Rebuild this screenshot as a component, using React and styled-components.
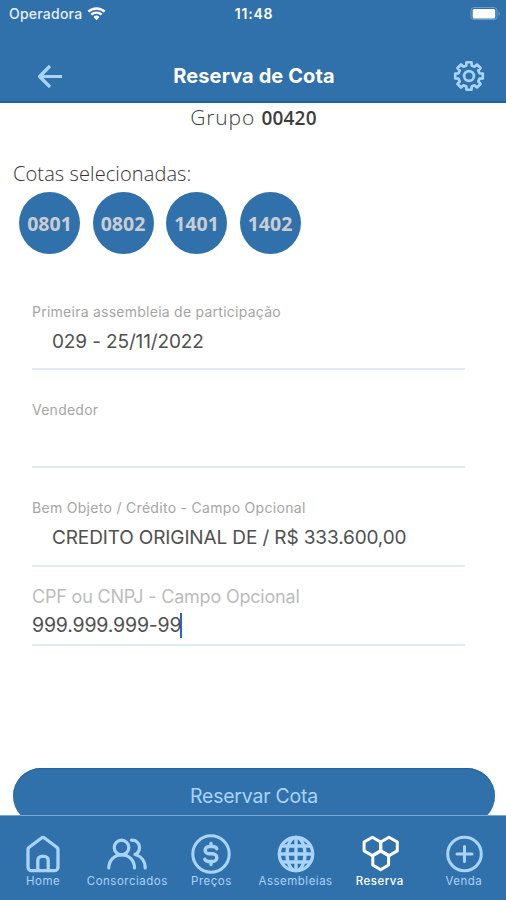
import React from 'react';
import styled, { createGlobalStyle, ThemeProvider } from 'styled-components';

const theme = {
  primary: '#3171ab',
  edge: '#1c639f',
  tint: '#a8d3fb',
  line: '#deebf8',
  text: '#505050',
  label: '#a5a5a5',
};

const GlobalStyle = createGlobalStyle`
  * {
    box-sizing: border-box;
  }

  body {
    margin: 0;
    background: #fff;
    font-family: Inter, 'Liberation Sans', sans-serif;
  }
`;

const Screen = styled.div`
  display: flex;
  flex-direction: column;
  width: 506px;
  height: 900px;
  overflow: hidden;
`;

const Header = styled.header`
  flex: none;
  height: 103px;
  background: ${({ theme }) => theme.primary};
  border-bottom: 2px solid ${({ theme }) => theme.edge};
  color: #fff;
`;

const StatusBar = styled.div`
  display: grid;
  grid-template-columns: 1fr auto 1fr;
  align-items: center;
  height: 28px;
  padding: 0 5px 0 9px;
  font-size: 14px;
  line-height: 28px;
`;

const Carrier = styled.div`
  display: flex;
  align-items: center;
  gap: 5px;
  color: #e3eefa;
  font-weight: 500;
  letter-spacing: 0.22px;
`;

const Clock = styled.div`
  margin-left: -2px;
  font-weight: 600;
  letter-spacing: 0.8px;
`;

const Battery = styled.div`
  display: flex;
  justify-content: flex-end;
`;

const NavBar = styled.div`
  display: grid;
  grid-template-columns: 64px 1fr 64px;
  align-items: center;
  height: 73px;
  padding: 22px 5px 0 18px;
`;

const NavButton = styled.button`
  display: flex;
  justify-content: center;
  padding: 0;
  border: 0;
  background: none;
  color: ${({ theme }) => theme.tint};
`;

const Title = styled.h1`
  margin: 0 0 0 -11px;
  font-size: 20px;
  font-weight: 700;
  letter-spacing: 0.1px;
  line-height: 24px;
  text-align: center;
`;

const Content = styled.main`
  flex: 1;
  min-height: 0;
  overflow: hidden;
`;

const Group = styled.h2`
  margin: 0;
  padding-left: 1px;
  color: #3d3d3d;
  font-family: 'Open Sans', 'Noto Sans', sans-serif;
  font-size: 21px;
  font-weight: 300;
  letter-spacing: 0.85px;
  line-height: 29px;
  text-align: center;

  strong {
    font-size: 19px;
    font-weight: 600;
    letter-spacing: 0.2px;
  }
`;

const Quotas = styled.section`
  padding: 26px 13px 0;
`;

const QuotasLabel = styled.div`
  color: #333;
  font-family: 'Open Sans', 'Noto Sans', sans-serif;
  font-size: 20px;
  font-weight: 300;
  letter-spacing: 0.1px;
  line-height: 30px;
`;

const QuotaList = styled.div`
  display: flex;
  gap: 12.5px;
  padding: 3px 6px 0;
`;

const Quota = styled.span`
  display: flex;
  align-items: center;
  justify-content: center;
  width: 61px;
  height: 62px;
  border-radius: 50%;
  background: ${({ theme }) => theme.primary};
  color: #c9cdd3;
  font-family: 'Open Sans', 'Noto Sans', sans-serif;
  font-size: 19.5px;
  font-weight: 700;
`;

const Form = styled.form`
  padding: 46px 41px 0 32px;
`;

const Field = styled.label`
  display: block;
  height: ${({ $height }) => $height}px;
  margin-bottom: ${({ $gap }) => $gap}px;
  border-bottom: 2px solid ${({ theme }) => theme.line};
`;

const FieldLabel = styled.span`
  display: block;
  color: ${({ theme, $large }) => ($large ? '#bcbcbc' : theme.label)};
  font-size: ${({ $large }) => ($large ? 18 : 14)}px;
  letter-spacing: ${({ $spacing }) => $spacing}px;
  line-height: ${({ $large }) => ($large ? 26 : 24)}px;
`;

const FieldValue = styled.span`
  display: flex;
  align-items: center;
  height: ${({ $large }) => ($large ? 30 : 35)}px;
  padding-left: ${({ $indent }) => ($indent ? 20 : 0)}px;
  color: ${({ theme }) => theme.text};
  font-size: ${({ $large }) => ($large ? 19.5 : 19)}px;
  letter-spacing: ${({ $large }) => ($large ? -0.18 : -0.13)}px;
  white-space: nowrap;
`;

const Caret = styled.i`
  width: 2px;
  height: 25px;
  margin-left: -1px;
  background: #2f5fd8;
`;

const SubmitButton = styled.button`
  display: block;
  width: 482px;
  height: 56px;
  margin: 122px 0 0 13px;
  padding: 0;
  border: 0;
  border-radius: 28px;
  background: ${({ theme }) => theme.primary};
  box-shadow: inset 0 1px 1px ${({ theme }) => theme.edge};
  color: ${({ theme }) => theme.tint};
  font-family: inherit;
  font-size: 19.5px;
  letter-spacing: -0.22px;
  line-height: 56px;
`;

const TabBar = styled.nav`
  flex: none;
  display: grid;
  grid-template-columns: repeat(6, 1fr);
  height: 85px;
  padding-left: 1px;
  border-top: 1px solid #78a9d6;
  background: ${({ theme }) => theme.primary};
`;

const Tab = styled.a`
  display: flex;
  flex-direction: column;
  align-items: center;
  padding-top: 18px;
  color: ${({ theme, $active }) => ($active ? '#fff' : theme.tint)};
  font-size: 11.5px;
  font-weight: ${({ $active }) => ($active ? 500 : 400)};
  letter-spacing: 0.5px;
  line-height: 16px;

  svg {
    display: block;
    margin-bottom: -1px;
  }
`;

const strokeProps = {
  fill: 'none',
  stroke: 'currentColor',
  strokeLinecap: 'round',
  strokeLinejoin: 'round',
};

const WifiIcon = () => (
  <svg width="19" height="15" viewBox="0 0 19 15">
    <path d="M1.4 4.6a11.8 11.8 0 0 1 16.2 0" fill="none" stroke="#fff" strokeWidth="2.5" />
    <path d="M4.3 7.6a7.6 7.6 0 0 1 10.4 0" fill="none" stroke="#fff" strokeWidth="2.3" />
    <path d="M6.5 10a4.4 4.4 0 0 1 6 0l-3 3.3z" fill="#fff" />
  </svg>
);

const BatteryIcon = () => (
  <svg width="32" height="15" viewBox="0 0 32 15">
    <rect x="2" y="0.5" width="26" height="12" rx="3" fill="none" stroke="#6f9dc9" />
    <rect x="3.7" y="2" width="22.5" height="9.5" rx="1.5" fill="#fff" />
    <path d="M29.5 4.5c1.8.6 1.8 3.4 0 4z" fill="#6f9dc9" />
  </svg>
);

const BackIcon = () => (
  <svg width="26" height="24" viewBox="0 0 26 24">
    <path d="M25 12.5H3M13 2L2.6 12.5 13 23" {...strokeProps} strokeLinecap="butt" strokeWidth="3.2" />
  </svg>
);

// Gear outline with eight rounded teeth.
const gearPath = () => {
  const points = [];
  for (let i = 0; i < 8; i += 1) {
    const center = (i * Math.PI) / 4 - Math.PI / 2;
    [
      [-0.25, 10.8],
      [-0.18, 14],
      [0.18, 14],
      [0.25, 10.8],
    ].forEach(([offset, radius]) => {
      const x = 16 + Math.cos(center + offset) * radius;
      const y = 16 + Math.sin(center + offset) * radius;
      points.push(`${x.toFixed(2)} ${y.toFixed(2)}`);
    });
  }
  return `M${points.join('L')}Z`;
};

const GearIcon = () => (
  <svg width="32" height="32" viewBox="0 0 32 32" {...strokeProps} strokeWidth="2.7">
    <path d={gearPath()} />
    <circle cx="16" cy="16" r="4.9" />
  </svg>
);

const HomeIcon = () => (
  <svg width="40" height="40" viewBox="0 0 40 40" {...strokeProps} strokeWidth="3.3">
    <path d="M5 15.5c0-1 .4-1.6 1.2-2.2L18.500 4c1-.7 2-.7 3 0l12.300 9.300c.8.6 1.200 1.200 1.200 2.200v17.700a3.500 3.500 0 0 1-3.500 3.500h-23A3.500 3.500 0 0 1 5 33.200z" />
    <path d="M14.8 36.5V26.3a4 4 0 0 1 4-4h2.4a4 4 0 0 1 4 4v10.2" />
  </svg>
);

const PeopleIcon = () => (
  <svg width="40" height="40" viewBox="0 0 40 40" {...strokeProps} strokeWidth="3.2">
    <circle cx="14.5" cy="13.5" r="7.3" />
    <path d="M1.8 34c0-7.5 5.5-13.2 12.9-13.2S27.5 26.500 27.500 34" />
    <path d="M24.5 6.2c4.6-.3 8 2.9 8 7.2 0 3.6-2.3 6-4.5 7.1 6 1.5 10.2 6.5 10.2 13.5" />
  </svg>
);

const PriceIcon = () => (
  <svg width="40" height="40" viewBox="0 0 40 40" {...strokeProps} strokeWidth="3">
    <circle cx="20" cy="20" r="18.2" />
    <path d="M25.8 14.800c-.8-1.600-2-2.300-4-2.300h-3.500c-5.600 0-5.600 7.300 0 7.300h3c6 0 6 7.700 0 7.700H18c-2.200 0-3.400-.8-4.200-2.300M20 9.500v3M20 27.500v3" strokeWidth="3.4" />
  </svg>
);

const GlobeIcon = () => (
  <svg width="40" height="40" viewBox="0 0 40 40" {...strokeProps} strokeWidth="3.3">
    <circle cx="20" cy="20" r="16.7" />
    <ellipse cx="20" cy="20" rx="9" ry="16.7" />
    <path d="M20 3.5v33M3.5 20h33M6 12h28M6 28h28" />
  </svg>
);

const HexagonsIcon = () => (
  <svg width="40" height="40" viewBox="0 0 40 40" {...strokeProps} strokeWidth="3">
    <path d="M12.4 3.3l8.300 4.700v8.900l-8.300 4.700-8.300-4.700V8z" />
    <path d="M29 3.300l8.300 4.700v8.900L29 21.600l-8.300-4.700V8z" />
    <path d="M20.700 16.900l7.900 4.700v9.300l-7.900 4.900-7.900-4.900v-9.300z" />
  </svg>
);

const PlusIcon = () => (
  <svg width="40" height="40" viewBox="0 0 40 40" {...strokeProps} strokeWidth="3">
    <circle cx="20.5" cy="20" r="16.8" />
    <path d="M20.500 12.500v15M13 20h15" />
  </svg>
);

const quotas = ['0801', '0802', '1401', '1402'];

const tabs = [
  { label: 'Home', Icon: HomeIcon },
  { label: 'Consorciados', Icon: PeopleIcon },
  { label: 'Preços', Icon: PriceIcon },
  { label: 'Assembleias', Icon: GlobeIcon },
  { label: 'Reserva', Icon: HexagonsIcon, active: true },
  { label: 'Venda', Icon: PlusIcon },
];

function App() {
  return (
    <ThemeProvider theme={theme}>
      <GlobalStyle />
      <Screen>
        <Header>
          <StatusBar>
            <Carrier>
              Operadora
              <WifiIcon />
            </Carrier>
            <Clock>11:48</Clock>
            <Battery>
              <BatteryIcon />
            </Battery>
          </StatusBar>
          <NavBar>
            <NavButton aria-label="Voltar">
              <BackIcon />
            </NavButton>
            <Title>Reserva de Cota</Title>
            <NavButton aria-label="Ajustes">
              <GearIcon />
            </NavButton>
          </NavBar>
        </Header>

        <Content>
          <Group>
            Grupo <strong>00420</strong>
          </Group>
          <Quotas>
            <QuotasLabel>Cotas selecionadas:</QuotasLabel>
            <QuotaList>
              {quotas.map(quota => (
                <Quota key={quota}>{quota}</Quota>
              ))}
            </QuotaList>
          </Quotas>
          <Form>
            <Field $height={70} $gap={28}>
              <FieldLabel $spacing={0.25}>Primeira assembleia de participação</FieldLabel>
              <FieldValue $indent>029 - 25/11/2022</FieldValue>
            </Field>
            <Field $height={70} $gap={28}>
              <FieldLabel $spacing={0.25}>Vendedor</FieldLabel>
            </Field>
            <Field $height={71} $gap={17}>
              <FieldLabel $spacing={0.3}>Bem Objeto / Crédito - Campo Opcional</FieldLabel>
              <FieldValue $indent>CREDITO ORIGINAL DE / R$ 333.600,00</FieldValue>
            </Field>
            <Field $height={62} $gap={0}>
              <FieldLabel $large $spacing={-0.2}>CPF ou CNPJ - Campo Opcional</FieldLabel>
              <FieldValue $large>
                999.999.999-99
                <Caret />
              </FieldValue>
            </Field>
          </Form>
          <SubmitButton type="button">Reservar Cota</SubmitButton>
        </Content>

        <TabBar>
          {tabs.map(({ label, Icon, active }) => (
            <Tab key={label} $active={active}>
              <Icon />
              {label}
            </Tab>
          ))}
        </TabBar>
      </Screen>
    </ThemeProvider>
  );
}

export default App;
